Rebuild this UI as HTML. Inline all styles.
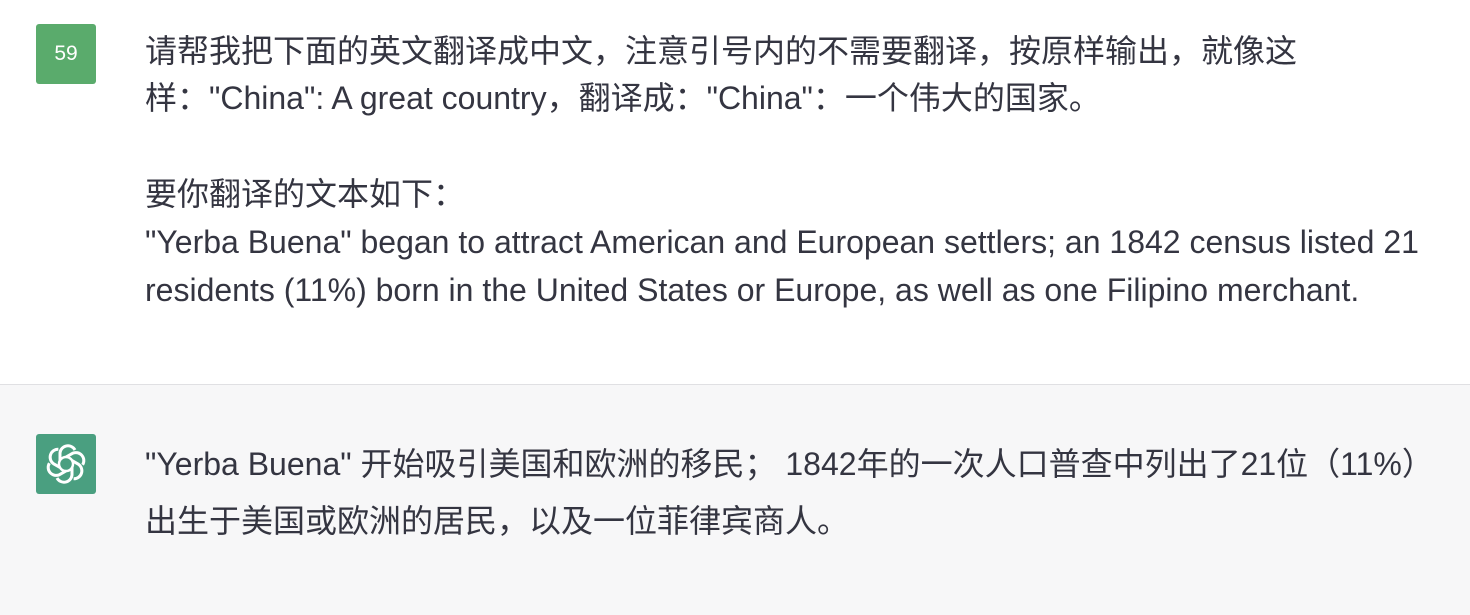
<!DOCTYPE html>
<html><head><meta charset="utf-8"><style>
html,body{margin:0;padding:0;width:1470px;height:614px;overflow:hidden;background:#fff}
.l{position:absolute;left:145px;white-space:nowrap;font-family:"Liberation Sans","Noto Sans CJK SC",sans-serif;font-size:32px;color:#343541;line-height:44px}
</style></head><body>
<div style="position:absolute;left:0;top:384px;width:1470px;height:230px;background:#f7f7f8;border-top:1px solid #e0e0e3"></div>
<div style="position:absolute;left:36px;top:24px;width:60px;height:60px;background:#5aab6c;border-radius:3px;color:#fff;font-family:'Liberation Sans',sans-serif;font-size:21px;line-height:60px;text-align:center">59</div>
<div style="position:absolute;left:36px;top:434px;width:60px;height:60px;background:#4a9f80;border-radius:3px">
<svg width="60" height="60" viewBox="0 0 60 60"><g fill="none" stroke="#fff" stroke-width="3" transform="translate(30 30)">
<g id="p"><path d="M-6,-3.5 V-11 A8,8 0 0 1 9,-14"/></g>
<use href="#p" transform="rotate(60)"/><use href="#p" transform="rotate(120)"/><use href="#p" transform="rotate(180)"/><use href="#p" transform="rotate(240)"/><use href="#p" transform="rotate(300)"/>
<circle r="7" stroke-width="2.5"/></g></svg></div>
<div class="l" style="top:29px">请帮我把下面的英文翻译成中文，注意引号内的不需要翻译，按原样输出，就像这</div>
<div class="l" style="top:76px">样："China": A great country，翻译成："China"：一个伟大的国家。</div>
<div class="l" style="top:172px">要你翻译的文本如下：</div>
<div class="l" style="top:220px">"Yerba Buena" began to attract American and European settlers; an 1842 census listed 21</div>
<div class="l" style="top:268px">residents (11%) born in the United States or Europe, as well as one Filipino merchant.</div>
<div class="l" style="top:442px">"Yerba Buena" 开始吸引美国和欧洲的移民； 1842年的一次人口普查中列出了21位（11%）</div>
<div class="l" style="top:499px">出生于美国或欧洲的居民，以及一位菲律宾商人。</div>
</body></html>
